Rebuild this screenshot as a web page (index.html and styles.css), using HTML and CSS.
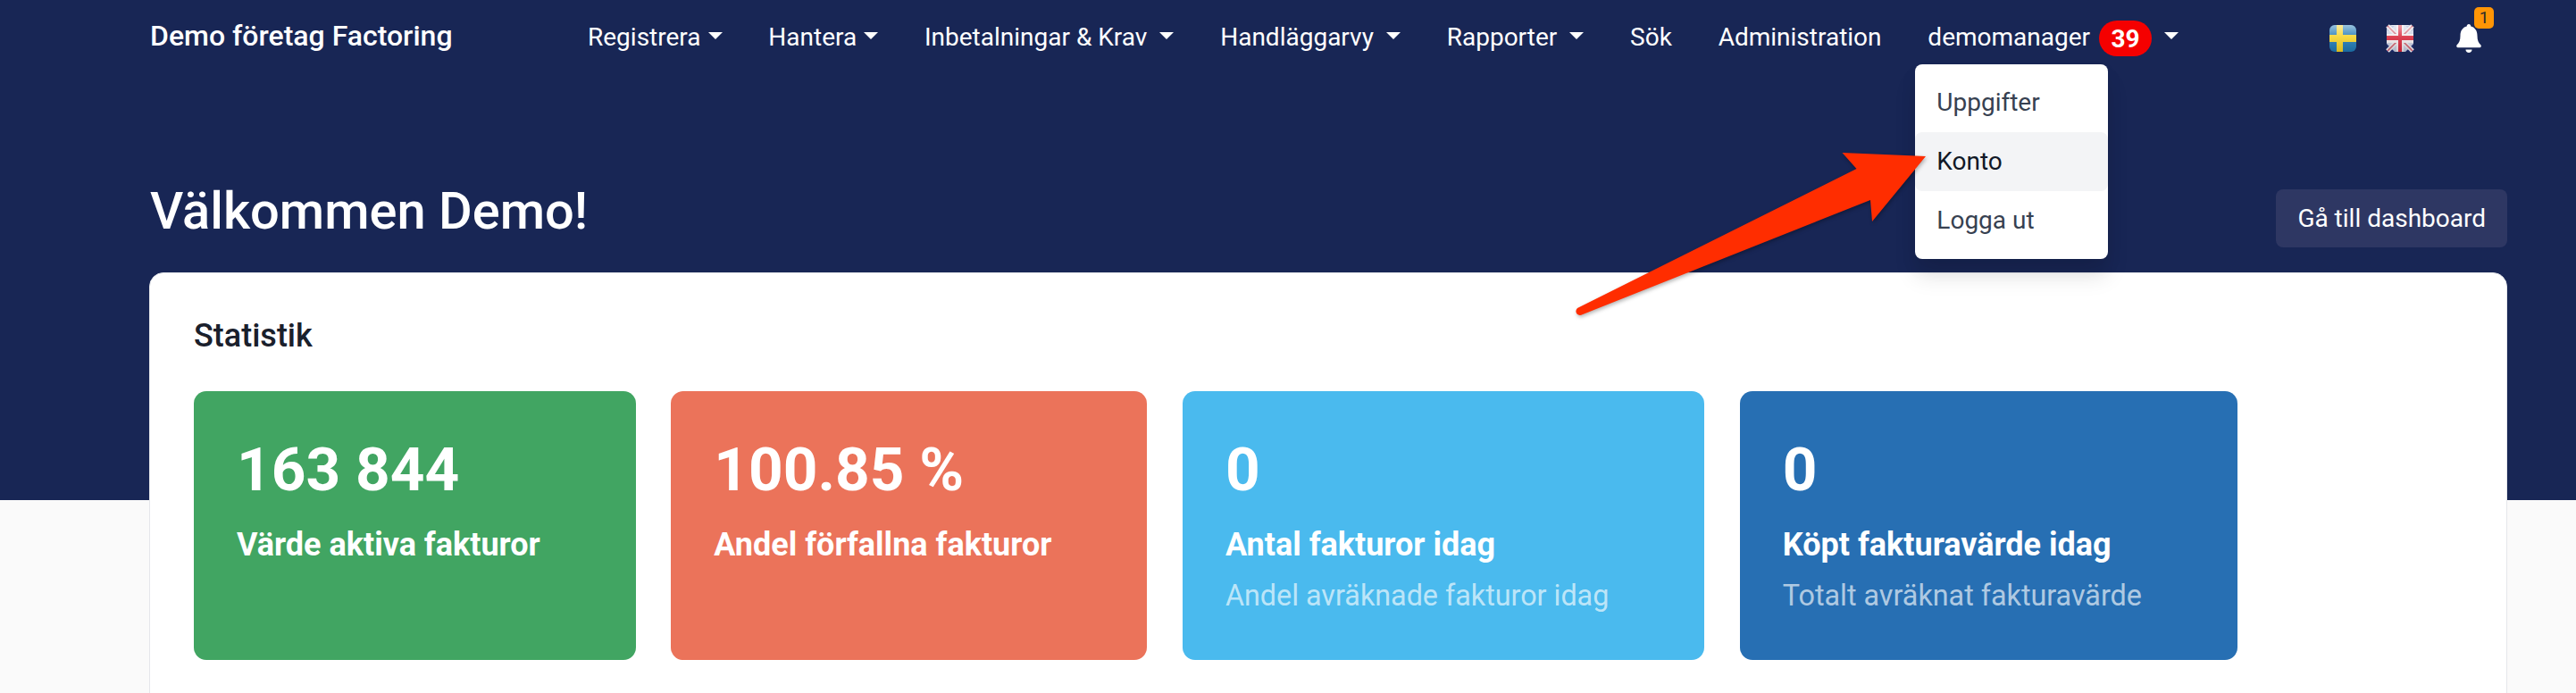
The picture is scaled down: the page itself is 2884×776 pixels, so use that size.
FILE: index.html
```html
<!DOCTYPE html>
<html lang="sv">
<head>
    <meta charset="UTF-8">
    <title>Demo företag Factoring</title>
    <link rel="stylesheet" href="styles.css">
</head>
<body>
    <div class="page">
        <header class="topbar">
            <a class="brand">Demo företag Factoring</a>
            <nav class="nav">
                <a class="nav-link">Registrera<span class="caret"></span></a>
                <a class="nav-link">Hantera<span class="caret"></span></a>
                <a class="nav-link nav-link-wide">Inbetalningar &amp; Krav<span class="caret"></span></a>
                <a class="nav-link nav-link-wide">Handläggarvy<span class="caret"></span></a>
                <a class="nav-link nav-link-wide">Rapporter<span class="caret"></span></a>
                <a class="nav-link">Sök</a>
                <a class="nav-link">Administration</a>
                <div class="nav-link nav-user">
                    demomanager
                    <span class="count-badge">39</span>
                    <span class="caret"></span>
                    <div class="user-menu">
                        <a class="menu-item">Uppgifter</a>
                        <a class="menu-item menu-item-active">Konto</a>
                        <a class="menu-item">Logga ut</a>
                    </div>
                </div>
            </nav>
            <div class="tools">
                <svg class="flag" viewBox="0 0 32 32">
                    <defs>
                        <linearGradient id="gloss" x1="0" y1="0" x2="0" y2="1">
                            <stop offset="0" stop-color="#fff" stop-opacity=".55"/>
                            <stop offset=".45" stop-color="#fff" stop-opacity=".12"/>
                            <stop offset="1" stop-color="#000" stop-opacity=".12"/>
                        </linearGradient>
                        <filter id="soft"><feGaussianBlur stdDeviation=".6"/></filter>
                    </defs>
                    <g filter="url(#soft)">
                        <rect x="1" y="1" width="30" height="30" rx="6" fill="#1f78b4"/>
                        <rect x="9" y="1" width="7" height="30" fill="#f5d327"/>
                        <rect x="1" y="12" width="30" height="8" fill="#f5d327"/>
                        <rect x="1" y="1" width="30" height="30" rx="6" fill="url(#gloss)"/>
                    </g>
                </svg>
                <svg class="flag" viewBox="0 0 32 32">
                    <g filter="url(#soft)">
                        <rect x="1" y="1" width="30" height="30" rx="6" fill="#c9cfe2"/>
                        <path d="M1 22l9 9H1zM31 22l-9 9h9z" fill="#1b2a70"/>
                        <path d="M10 2L2 2v6zM22 2h8v6z" fill="#8c9ccc"/>
                        <path d="M2 2l28 28M30 2L2 30" stroke="#e9e4e8" stroke-width="5"/>
                        <path d="M2 2l28 28M30 2L2 30" stroke="#cf5a68" stroke-width="1.6"/>
                        <rect x="12" y="1" width="8" height="30" fill="#f0eaec"/>
                        <rect x="1" y="11" width="30" height="10" fill="#f0eaec"/>
                        <rect x="14" y="1" width="4" height="30" fill="#d8283c"/>
                        <rect x="1" y="13" width="30" height="5" fill="#d8283c"/>
                        <rect x="1" y="1" width="30" height="30" rx="6" fill="url(#gloss)"/>
                    </g>
                </svg>
                <div class="bell">
                    <svg viewBox="0 0 28 32" width="28" height="32">
                        <path fill="#fff" d="M14 0c1.4 0 2.3 1 2.3 2.5C21 3.7 23.5 7.500 23.500 13c0 5 1.300 8 4 10.500.5.5.5 2.700-1 2.700H1.500c-1.500 0-1.500-2.200-1-2.700C3.200 21 4.500 18 4.500 13c0-5.500 2.500-9.300 7.200-10.500C11.700 1 12.600 0 14 0z"/>
                        <path fill="#fff" d="M10.500 28.500h7c0 2-1.500 3.500-3.500 3.500s-3.500-1.500-3.500-3.500z"/>
                    </svg>
                    <span class="bell-badge">1</span>
                </div>
            </div>
        </header>

        <section class="hero">
            <h1 class="hero-title">Välkommen Demo!</h1>
            <a class="dashboard-btn">Gå till dashboard</a>
        </section>

        <main class="panel">
            <h2 class="panel-title">Statistik</h2>
            <div class="stats">
                <div class="stat stat-green">
                    <div class="stat-value">163 844</div>
                    <div class="stat-label">Värde aktiva fakturor</div>
                </div>
                <div class="stat stat-red">
                    <div class="stat-value">100.85 %</div>
                    <div class="stat-label">Andel förfallna fakturor</div>
                </div>
                <div class="stat stat-sky">
                    <div class="stat-value">0</div>
                    <div class="stat-label">Antal fakturor idag</div>
                    <div class="stat-sub">Andel avräknade fakturor idag</div>
                </div>
                <div class="stat stat-blue">
                    <div class="stat-value">0</div>
                    <div class="stat-label">Köpt fakturavärde idag</div>
                    <div class="stat-sub">Totalt avräknat fakturavärde</div>
                </div>
            </div>
        </main>

        <svg class="arrow" viewBox="0 0 2884 776" width="2884" height="776">
            <path fill="#ff2d00" d="M2156 175L2062.500 171L2078.500 189L1766 345Q1763 348 1765.500 351.500Q1768 354 1772 352L2094 224L2096 248Z"/>
        </svg>
    </div>
</body>
</html>
```

FILE: styles.css
```css
* {
    box-sizing: border-box;
}

body {
    margin: 0;
    font-family: Roboto, "Liberation Sans", sans-serif;
    background: #fafafa;
}

.page {
    position: relative;
    height: 100vh;
    overflow: hidden;
    padding: 0 77px 0 167px;
    background: linear-gradient(#182655 560px, #fafafa 560px);
}

.topbar {
    display: flex;
    align-items: center;
    height: 86px;
    color: #fff;
}

.brand {
    width: 491px;
    flex: none;
    padding-left: 1px;
    font-size: 32px;
    font-weight: 500;
    margin-top: -6px;
}

.nav {
    display: flex;
    align-items: center;
    gap: 51.8px;
    margin-top: -3px;
    font-size: 28px;
}

.nav-link {
    display: flex;
    align-items: center;
    white-space: nowrap;
}

.caret {
    width: 0;
    height: 0;
    margin-left: 8px;
    margin-top: -4px;
    border-top: 8px solid #fff;
    border-left: 8px solid transparent;
    border-right: 8px solid transparent;
}

.nav-link-wide .caret,
.nav-user .caret {
    margin-left: 14px;
}

.nav-user {
    position: relative;
}

.count-badge {
    display: flex;
    align-items: center;
    justify-content: center;
    width: 59px;
    height: 40px;
    margin-top: 3px;
    margin-left: 10px;
    border-radius: 20px;
    background: #f50000;
    font-size: 28px;
    font-weight: 700;
}

.user-menu {
    position: absolute;
    top: 52px;
    left: -14px;
    width: 216px;
    padding: 10px 0;
    border-radius: 8px;
    background: #fff;
    box-shadow: 0 20px 25px rgba(0, 0, 0, .1), 0 10px 20px rgba(0, 0, 0, .06);
    color: #374151;
}

.menu-item {
    display: flex;
    align-items: center;
    height: 66px;
    padding-bottom: 2px;
    padding-left: 24px;
    border-radius: 8px;
}

.menu-item-active {
    background: #f3f4f6;
    color: #111827;
}

.tools {
    display: flex;
    align-items: center;
    margin-left: 168px;
}

.flag {
    width: 32px;
    height: 32px;
    margin-right: 32px;
}

.bell {
    position: relative;
    width: 28px;
    height: 32px;
    margin-left: 15px;
}

.bell-badge {
    position: absolute;
    top: -19px;
    left: 20px;
    width: 22px;
    height: 24px;
    border-radius: 5px;
    background: #ff9505;
    color: #2b2b2b;
    font-size: 19px;
    line-height: 24px;
    text-align: center;
}

.hero {
    display: flex;
    align-items: center;
    justify-content: space-between;
    height: 65px;
    margin-top: 126px;
    margin-bottom: 28px;
}

.hero-title {
    margin: 0 0 18px 1px;
    color: #fff;
    font-size: 57.8px;
    font-weight: 500;
}

.dashboard-btn {
    display: flex;
    align-items: center;
    height: 65px;
    padding: 0 24px;
    border-radius: 8px;
    background: #2e3763;
    color: #fff;
    font-size: 28px;
}

.panel {
    height: 520px;
    padding: 49px;
    border: 1px solid #e5e7eb;
    border-radius: 16px;
    background: #fff;
}

.panel-title {
    margin: 1px 0 42px;
    color: #1a202c;
    font-size: 36px;
    font-weight: 500;
    line-height: 40px;
}

.stats {
    display: flex;
    gap: 39.5px;
}

.stat {
    height: 301px;
    padding: 48px 107px 0 48px;
    border-radius: 14px;
    color: #fff;
}

.stat-value {
    margin-bottom: 20px;
    font-size: 67.5px;
    font-weight: 700;
    line-height: 80px;
}

.stat-label {
    margin-bottom: 9px;
    font-size: 36px;
    font-weight: 700;
    line-height: 48px;
}

.stat-sub {
    color: rgba(255, 255, 255, .65);
    font-size: 32.3px;
    line-height: 48px;
}

.stat-green { background: #41a562; }
.stat-red { background: #eb735a; }
.stat-sky { background: #4abaee; }
.stat-blue { background: #276fb3; }

.arrow {
    position: absolute;
    top: 0;
    left: 0;
    filter: drop-shadow(1px 2px 2px rgba(0, 0, 0, .3));
    pointer-events: none;
}
```
